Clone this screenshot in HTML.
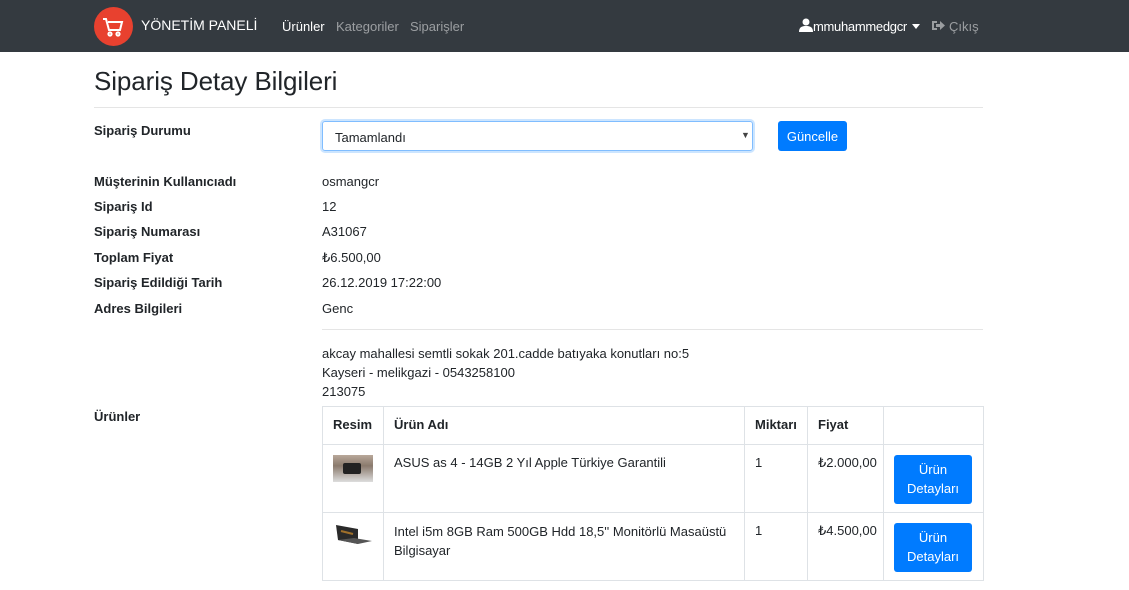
<!DOCTYPE html><html><head><meta charset="utf-8"><style>
body{margin:0;width:1129px;height:590px;overflow:hidden;background:#fff;font-family:"Liberation Sans",sans-serif;color:#212529;font-size:13px;position:relative}
.a{position:absolute;white-space:nowrap}
.nav{position:absolute;left:0;top:0;width:1129px;height:52px;background:#343a40}
.lb{font-weight:bold;left:94px}
.v{left:322px}
table{position:absolute;left:322px;top:406px;border-collapse:collapse;width:661px;table-layout:fixed}
td,th{border:1px solid #dee2e6;vertical-align:top;text-align:left;padding:10px 10px 8px;font-size:13px}
th{height:17px;padding:10px}
.btn{background:#007bff;color:#fff;border-radius:3px;text-align:center;font-size:13px}
</style></head><body>
<div class="nav"></div>
<div class="a" style="left:94px;top:7px;width:39px;height:39px;border-radius:50%;background:#e8412f"></div>
<svg class="a" style="left:101px;top:14px" width="25" height="25" viewBox="0 0 25 25" fill="none" stroke="#fff" stroke-width="2"><path d="M2 5h3l3 11h11l2-8H7"/><circle cx="9" cy="20" r="1.6"/><circle cx="17" cy="20" r="1.6"/></svg>
<div class="a" style="left:141px;top:17px;font-size:14px;color:#fff">YÖNETİM PANELİ</div>
<div class="a" style="left:282px;top:19px;font-size:13px;color:#fff">Ürünler</div>
<div class="a" style="left:336px;top:19px;font-size:13px;color:rgba(255,255,255,.5)">Kategoriler</div>
<div class="a" style="left:410px;top:19px;font-size:13px;color:rgba(255,255,255,.5)">Siparişler</div>
<svg class="a" style="left:799px;top:18px" width="14" height="14" viewBox="0 0 14 14" fill="#fff"><circle cx="7" cy="4" r="3.5"/><path d="M0 14c0-5 3-6 7-6s7 1 7 6z"/></svg>
<div class="a" style="left:813px;top:19px;font-size:13px;color:#fff;letter-spacing:-0.3px">mmuhammedgcr</div>
<div class="a" style="left:912px;top:24px;border-left:4px solid transparent;border-right:4px solid transparent;border-top:5px solid #fff"></div>
<svg class="a" style="left:932px;top:20px" width="14" height="11" viewBox="0 0 14 11" fill="rgba(255,255,255,.5)"><path d="M0 1h5v2H2v5h3v2H0z"/><path d="M4 4h4V1l5 4.5L8 10V7H4z"/></svg>
<div class="a" style="left:949px;top:19px;font-size:13px;color:rgba(255,255,255,.5)">Çıkış</div>
<div class="a" style="left:94px;top:66px;font-size:26px;letter-spacing:-0.1px">Sipariş Detay Bilgileri</div>
<div class="a" style="left:94px;top:107px;width:889px;border-top:1px solid #e5e5e5"></div>
<div class="a lb" style="top:123px">Sipariş Durumu</div>
<div class="a" style="left:322px;top:121px;width:429px;height:28px;border:1px solid #80bdff;border-radius:3px;box-shadow:0 0 0 2px rgba(0,123,255,.2)"></div>
<div class="a" style="left:335px;top:130px">Tamamlandı</div>
<div class="a" style="left:741px;top:130px;font-size:9px;color:#444">▼</div>
<div class="a btn" style="left:778px;top:121px;width:69px;height:30px;line-height:32px">Güncelle</div>
<div class="a lb" style="top:174px">Müşterinin Kullanıcıadı</div><div class="a v" style="top:174px">osmangcr</div>
<div class="a lb" style="top:199px">Sipariş Id</div><div class="a v" style="top:199px">12</div>
<div class="a lb" style="top:224px">Sipariş Numarası</div><div class="a v" style="top:224px">A31067</div>
<div class="a lb" style="top:250px">Toplam Fiyat</div><div class="a v" style="top:250px">₺6.500,00</div>
<div class="a lb" style="top:275px">Sipariş Edildiği Tarih</div><div class="a v" style="top:275px">26.12.2019 17:22:00</div>
<div class="a lb" style="top:301px">Adres Bilgileri</div><div class="a v" style="top:301px">Genc</div>
<div class="a" style="left:322px;top:329px;width:661px;border-top:1px solid #e5e5e5"></div>
<div class="a v" style="top:344px;line-height:19px">akcay mahallesi semtli sokak 201.cadde batıyaka konutları no:5<br>Kayseri - melikgazi - 0543258100<br>213075</div>
<div class="a lb" style="top:409px">Ürünler</div>
<table>
<colgroup><col style="width:61px"><col style="width:361px"><col style="width:63px"><col style="width:76px"><col style="width:100px"></colgroup>
<tr><th>Resim</th><th>Ürün Adı</th><th>Miktarı</th><th>Fiyat</th><th></th></tr>
<tr style="height:68px"><td><div style="width:40px;height:27px;background:linear-gradient(#b9a89a,#8a7a6d 40%,#ddd);position:relative"><div style="position:absolute;left:10px;top:8px;width:18px;height:11px;background:#222;border-radius:2px"></div></div></td><td>ASUS as 4 - 14GB 2 Yıl Apple Türkiye Garantili</td><td>1</td><td>₺2.000,00</td><td><div class="btn" style="width:78px;height:49px;line-height:19px;padding-top:5px;box-sizing:border-box">Ürün<br>Detayları</div></td></tr>
<tr style="height:68px"><td><svg width="40" height="28" viewBox="0 0 40 28"><path d="M3 2l22 4 0 15-20-4z" fill="#2a2a2a"/><path d="M5 17l20 4 14-3-18-3z" fill="#555"/><path d="M8 8l12 3" stroke="#a0702a" stroke-width="2"/></svg></td><td style="line-height:19px;padding-top:9px">Intel i5m 8GB Ram 500GB Hdd 18,5'' Monitörlü Masaüstü<br>Bilgisayar</td><td>1</td><td>₺4.500,00</td><td><div class="btn" style="width:78px;height:49px;line-height:19px;padding-top:5px;box-sizing:border-box">Ürün<br>Detayları</div></td></tr>
</table>
</body></html>
